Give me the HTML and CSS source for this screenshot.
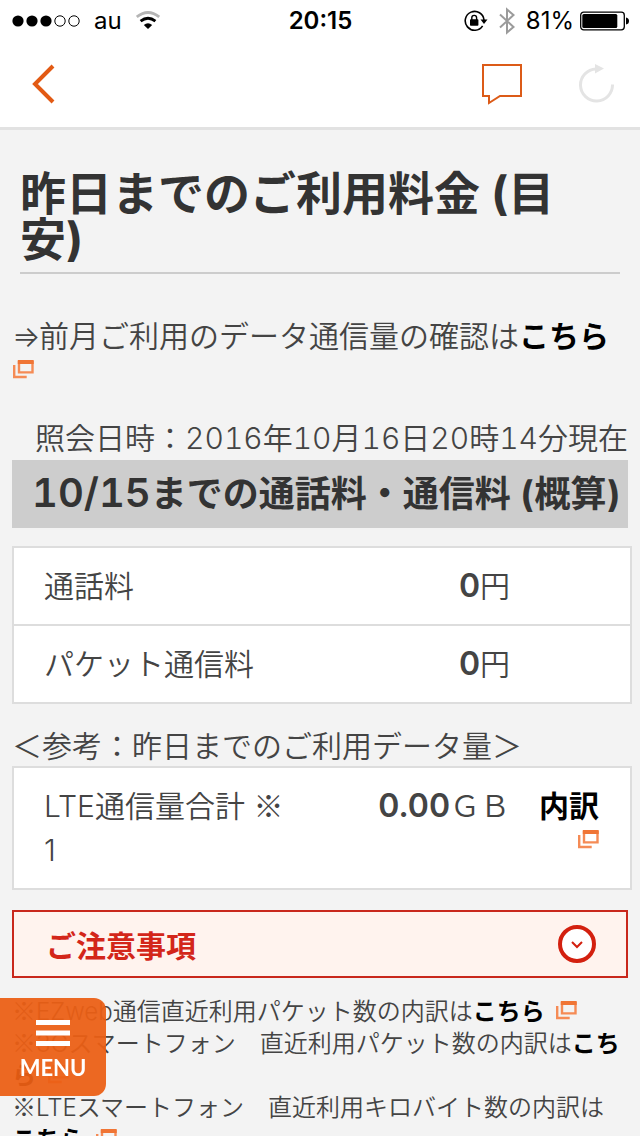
FILE: index.html
```html
<!DOCTYPE html>
<html lang="ja">
<head>
<meta charset="utf-8">
<meta name="viewport" content="width=device-width, initial-scale=1">
<title>昨日までのご利用料金 (目安)</title>
<link rel="stylesheet" href="styles.css">
</head>
<body>
<svg class="defs" aria-hidden="true">
  <symbol id="window" viewBox="0 0 22 20">
    <path d="M2.200 6v12h12.500" fill="none" stroke="#f58b55" stroke-width="2.400"/>
    <path d="M7 2v11.400h13.500V2" fill="none" stroke="#f58b55" stroke-width="2.400"/>
    <path d="M5.800 1h15.900v4H5.800z" fill="#f07535"/>
  </symbol>
</svg>

<header class="top">
  <div class="status">
    <div class="status-left">
      <svg width="68" height="12" viewBox="0 0 68 12" aria-hidden="true">
        <circle cx="6" cy="6" r="5.6"/><circle cx="20" cy="6" r="5.6"/><circle cx="34" cy="6" r="5.6"/>
        <g fill="none" stroke="#000"><circle cx="48" cy="6" r="5.2"/><circle cx="62" cy="6" r="5.2"/></g>
      </svg>
      <span>au</span>
      <svg width="24" height="19" viewBox="0 0 24 19" aria-hidden="true">
        <path d="M.8 6Q12-3 23.200 6" fill="none" stroke="#b5b5b5" stroke-width="2.800"/>
        <path d="M4.600 10.200Q12 4.200 19.400 10.200" fill="none" stroke="#000" stroke-width="2.800"/>
        <path d="M7.800 14Q12 10.400 16.200 14L12 18z"/>
      </svg>
    </div>
    <time class="clock">20:15</time>
    <div class="status-right">
      <svg width="24" height="22" viewBox="0 0 24 22" aria-hidden="true">
        <path d="M18.6 15.8A9.4 9.4 0 1 1 20 10" fill="none" stroke="#000" stroke-width="1.6"/>
        <path d="M16.5 9.5h7L20 14z"/>
        <rect x="6" y="9.3" width="8.4" height="6.4" rx=".8"/>
        <path d="M7.8 10V7.8a2.4 2.4 0 0 1 4.8 0V10" fill="none" stroke="#000" stroke-width="1.4"/>
      </svg>
      <svg width="18" height="28" viewBox="0 0 18 28" aria-hidden="true">
        <path d="M2 7.5L15.5 20 9 25.500V2.500L15.500 8 2 20.500" fill="none" stroke="#9b9b9b" stroke-width="2"/>
      </svg>
      <span class="battery">81%
        <svg width="49" height="20" viewBox="0 0 49 20" aria-hidden="true">
          <rect x=".7" y="1.200" width="43.600" height="17.600" rx="3" fill="none" stroke="#000" stroke-width="1.300"/>
          <rect x="2.300" y="3" width="35" height="14" rx="1.500"/>
          <path d="M46 6.500q3 .5 3 3.500t-3 3.500z"/>
        </svg>
      </span>
    </div>
  </div>
  <nav class="bar">
    <button class="icon-button back" type="button" aria-label="戻る">
      <svg width="24" height="40" viewBox="0 0 24 40"><path d="M21 2L3 20l18 18" fill="none" stroke="#e25a14" stroke-width="4"/></svg>
    </button>
    <button class="icon-button" type="button" aria-label="メッセージ">
      <svg width="42" height="42" viewBox="0 0 42 42"><path d="M2 2h38v31H19L8 40v-7H2z" fill="none" stroke="#dc5b18" stroke-width="2"/></svg>
    </button>
    <button class="icon-button" type="button" aria-label="再読み込み" disabled>
      <svg width="36" height="40" viewBox="0 0 36 40"><path d="M17 5A16 16 0 1 0 33.500 20.500" fill="none" stroke="#e4e4e4" stroke-width="3"/><path d="M16 0l9 4.500-9 5z" fill="#e4e4e4"/></svg>
    </button>
  </nav>
</header>

<main class="page">
  <h1 class="title">昨日までのご利用料金 (目<br>安)</h1>
  <p class="intro"><span class="arrow">⇒</span>前月ご利用のデータ通信量の確認は<a class="link" href="#previous">こちら</a><br><svg class="window"><use href="#window"/></svg></p>

  <p class="date">照会日時：2016年10月16日20時14分現在</p>
  <h2 class="section"><span class="day">10/15</span>までの通話料・通信料 (概算)</h2>
  <table class="charges">
    <tr><th scope="row">通話料</th><td class="amount"><b>0</b>円</td><td class="detail"></td></tr>
    <tr><th scope="row">パケット通信料</th><td class="amount"><b>0</b>円</td><td class="detail"></td></tr>
  </table>

  <p class="caption">＜参考：昨日までのご利用データ量＞</p>
  <table class="charges">
    <tr><th scope="row">LTE通信量合計 <span class="mark">※</span><br>1</th><td class="amount"><b>0.00</b>ＧＢ</td><td class="detail"><a class="link" href="#detail">内訳<br><svg class="window"><use href="#window"/></svg></a></td></tr>
  </table>

  <button class="notice" type="button" aria-expanded="false">
    <span>ご注意事項</span>
    <svg width="38" height="38" viewBox="0 0 38 38" aria-hidden="true"><circle cx="19" cy="19" r="17" fill="#fff" stroke="#d3200f" stroke-width="4"/><path d="M14 17l5 5 5-5" fill="none" stroke="#d3200f" stroke-width="2"/></svg>
  </button>

  <div class="notes">
    <p><span class="mark">※</span>EZweb通信直近利用パケット数の内訳は<a class="link" href="#ezweb">こちら</a> <svg class="window"><use href="#window"/></svg></p>
    <p><span class="mark">※</span>3Gスマートフォン　直近利用パケット数の内訳は<a class="link" href="#3g">こち<br>ら</a> <svg class="window"><use href="#window"/></svg></p>
    <p><span class="mark">※</span>LTEスマートフォン　直近利用キロバイト数の内訳は<br><a class="link" href="#lte">こちら</a> <svg class="window"><use href="#window"/></svg></p>
  </div>
</main>

<button class="menu" type="button">
  <svg width="34" height="26" viewBox="0 0 34 26" aria-hidden="true"><path d="M0 0h34v5H0zM0 10.500h34v5H0zM0 21h34v5H0z" fill="#fff"/></svg>
  <span>MENU</span>
</button>
</body>
</html>
```
FILE: styles.css
```css
* {
  box-sizing: border-box;
}

body {
  display: flex;
  flex-direction: column;
  height: 100vh;
  margin: 0;
  overflow: hidden;
  background: #f3f3f3;
  color: #444;
  font-family: Inter, "Noto Sans CJK JP", sans-serif;
  font-size: 30px;
  font-weight: 350;
  line-height: 32px;
}

h1, h2, p {
  margin: 0;
}

button {
  border: 0;
  padding: 0;
  background: none;
  font-family: inherit;
}

svg {
  flex: none;
}

.defs {
  position: absolute;
  width: 0;
  height: 0;
}

.top {
  flex: none;
  border-bottom: 3px solid #e2e2e2;
  background: #fff;
  color: #000;
}

.status {
  display: grid;
  grid-template-columns: 1fr auto 1fr;
  align-items: center;
  height: 40px;
  padding: 1px 11px 0 12px;
  font-size: 24px;
  font-weight: 400;
}

.status-left,
.status-right {
  display: flex;
  align-items: center;
  gap: 14px;
}

.status-right {
  justify-content: flex-end;
  gap: 10px;
}

.battery {
  display: flex;
  align-items: center;
  gap: 6px;
}

.clock {
  font-weight: 600;
}

.bar {
  display: flex;
  align-items: center;
  gap: 56px;
  height: 87px;
  padding: 1px 25px 0 32px;
}

.back {
  margin-right: auto;
}

.icon-button {
  display: flex;
}

.page {
  flex: 1;
  min-height: 0;
  padding: 40px 12px 0;
  overflow: hidden;
}

.title {
  margin: 0 8px 46px;
  border-bottom: 2px solid #ccc;
  padding-bottom: 10px;
  color: #333;
  font-size: 46px;
  font-weight: 700;
  line-height: 46px;
}

.intro {
  white-space: nowrap;
}

.arrow {
  display: inline-block;
  width: 27px;
}

.mark {
  font-family: "Noto Sans CJK JP", sans-serif;
  line-height: 1px;
}

.link {
  color: #000;
  font-weight: 700;
  text-decoration: none;
}

.window {
  width: 22px;
  height: 20px;
}

.date {
  margin-top: 38px;
  text-align: right;
  white-space: nowrap;
  font-feature-settings: "tnum";
}

.section {
  margin: 6px 0 18px;
  padding: 0 4px 0 20px;
  background: #cdcdcd;
  color: #333;
  font-size: 36px;
  font-weight: 700;
  line-height: 68px;
  white-space: nowrap;
  font-feature-settings: "tnum";
}

.day {
  font-size: 40px;
  font-weight: 600;
  line-height: 40px;
}

.charges {
  width: calc(100% + 4px);
  border: 2px solid #ddd;
  border-collapse: collapse;
  table-layout: fixed;
  background: #fff;
  line-height: 44px;
}

.charges tr {
  border-top: 2px solid #ddd;
}

.charges th,
.charges td {
  padding: 16px 0;
  font-weight: 350;
  vertical-align: top;
}

.charges th {
  padding-left: 30px;
  text-align: left;
}

.charges .amount {
  width: 180px;
  text-align: right;
}

.amount b {
  font-size: 32px;
  font-weight: 600;
}

.charges .detail {
  width: 121px;
  padding: 22px 31px 0 0;
  line-height: 32px;
  text-align: right;
}

.caption {
  margin: 26px 0 4px;
}

.notice {
  display: flex;
  align-items: center;
  justify-content: space-between;
  width: 100%;
  height: 68px;
  margin: 20px 0 18px;
  border: 2px solid #c9281c;
  padding: 0 30px 0 32px;
  background: #fff3ee;
  color: #d3261a;
  font-size: 30px;
  font-weight: 700;
}

.notes {
  font-size: 24px;
  white-space: nowrap;
}

.notes .window {
  margin-left: 4px;
}

.menu {
  position: fixed;
  bottom: 40px;
  left: 0;
  display: flex;
  flex-direction: column;
  align-items: center;
  justify-content: center;
  gap: 10px;
  width: 106px;
  height: 98px;
  border-radius: 0 12px 12px 0;
  padding-top: 6px;
  background: rgba(235, 95, 20, 0.94);
  color: #fff;
  font-family: Lato, sans-serif;
  font-size: 22px;
  font-weight: 700;
  line-height: 24px;
}
```
